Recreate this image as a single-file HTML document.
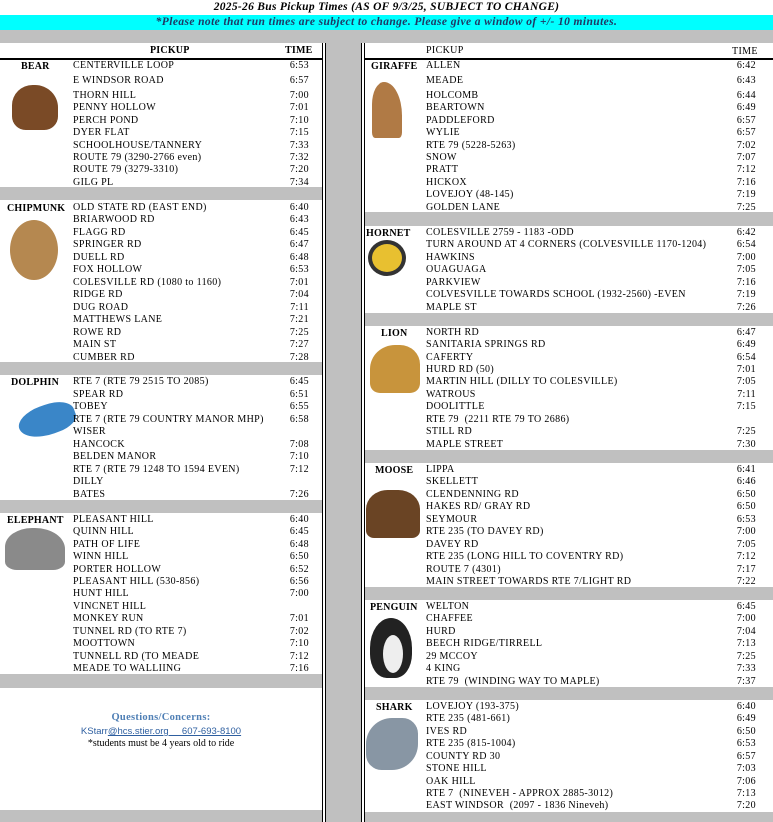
<!DOCTYPE html>
<html><head><meta charset="utf-8"><style>
*{margin:0;padding:0;box-sizing:border-box}
body{width:773px;height:822px;overflow:hidden;background:#fff;font-family:"Liberation Serif",serif;font-size:10px;color:#000;position:relative}
.a{position:absolute}
.r{position:absolute;height:12px;line-height:12px;white-space:nowrap;letter-spacing:.35px}
.g{position:absolute;background:#c0c0c0}
.n{font-weight:bold;letter-spacing:.2px}
.tl{position:absolute;width:40px;text-align:right}
</style></head><body>
<div class="a" style="left:0;top:0;width:773px;height:15px;text-align:center;line-height:15px;font-style:italic;font-weight:bold;font-size:11.5px;letter-spacing:.3px">2025-26 Bus Pickup Times (AS OF 9/3/25, SUBJECT TO CHANGE)</div>
<div class="a" style="left:0;top:15px;width:773px;height:15px;background:#00ffff;text-align:center;line-height:15px;font-style:italic;font-weight:bold;font-size:11.5px;letter-spacing:.4px;color:#1f3864">*Please note that run times are subject to change. Please give a window of +/- 10 minutes.</div>
<div class="g" style="left:0;top:30px;width:773px;height:13px"></div>
<div class="g" style="left:326px;top:43px;width:35px;height:779px"></div>
<div class="a" style="left:322px;top:43px;width:4px;height:779px;border-left:1px solid #000;border-right:1px solid #000"></div>
<div class="a" style="left:361px;top:43px;width:4px;height:779px;border-left:1px solid #000;border-right:1px solid #000"></div>
<div class="a" style="left:0;top:58px;width:322px;height:2px;background:#000"></div>
<div class="a" style="left:365px;top:58px;width:408px;height:2px;background:#000"></div>
<div class="r n" style="left:150px;top:45px">PICKUP</div>
<div class="r n" style="left:285px;top:45px">TIME</div>
<div class="r" style="left:426px;top:45px">PICKUP</div>
<div class="r" style="left:732px;top:46px">TIME</div>

<div class="g" style="left:0;top:187px;width:322px;height:13px"></div>
<div class="g" style="left:0;top:362px;width:322px;height:13px"></div>
<div class="g" style="left:0;top:500px;width:322px;height:13px"></div>
<div class="g" style="left:0;top:674px;width:322px;height:14px"></div>
<div class="g" style="left:0;top:810px;width:322px;height:12px"></div>
<div class="g" style="left:365px;top:212px;width:408px;height:14px"></div>
<div class="g" style="left:365px;top:313px;width:408px;height:13px"></div>
<div class="g" style="left:365px;top:450px;width:408px;height:13px"></div>
<div class="g" style="left:365px;top:587px;width:408px;height:13px"></div>
<div class="g" style="left:365px;top:687px;width:408px;height:13px"></div>
<div class="g" style="left:365px;top:812px;width:408px;height:10px"></div>

<div class="a" style="left:12px;top:85px;width:46px;height:45px;background:#7a4a26;border-radius:45% 50% 30% 30%"></div>
<div class="a" style="left:372px;top:82px;width:30px;height:56px;background:#b07a45;border-radius:40% 60% 10% 10%"></div>
<div class="a" style="left:10px;top:220px;width:48px;height:60px;background:#b58850;border-radius:50%"></div>
<div class="a" style="left:18px;top:405px;width:58px;height:30px;background:#3a86c8;border-radius:50% 50% 40% 60%;transform:rotate(-20deg)"></div>
<div class="a" style="left:5px;top:528px;width:60px;height:42px;background:#8a8a8a;border-radius:45% 50% 20% 20%"></div>
<div class="a" style="left:368px;top:240px;width:38px;height:36px;background:#e8c030;border-radius:50%;border:4px solid #333"></div>
<div class="a" style="left:370px;top:345px;width:50px;height:48px;background:#c8943c;border-radius:50% 40% 20% 20%"></div>
<div class="a" style="left:366px;top:490px;width:54px;height:48px;background:#6a4424;border-radius:40% 40% 15% 15%"></div>
<div class="a" style="left:370px;top:618px;width:42px;height:60px;background:#222;border-radius:50% 50% 40% 40%"></div>
<div class="a" style="left:383px;top:635px;width:20px;height:38px;background:#eee;border-radius:50%"></div>
<div class="a" style="left:366px;top:718px;width:52px;height:52px;background:#8896a4;border-radius:50% 30% 50% 30%"></div>

<div class="r n" style="left:21px;top:61px">BEAR</div>
<div class="r n" style="left:7px;top:203px">CHIPMUNK</div>
<div class="r n" style="left:11px;top:377px">DOLPHIN</div>
<div class="r n" style="left:7px;top:515px">ELEPHANT</div>
<div class="r n" style="left:371px;top:61px">GIRAFFE</div>
<div class="r n" style="left:366px;top:228px">HORNET</div>
<div class="r n" style="left:381px;top:328px">LION</div>
<div class="r n" style="left:375px;top:465px">MOOSE</div>
<div class="r n" style="left:370px;top:602px">PENGUIN</div>
<div class="r n" style="left:376px;top:702px">SHARK</div>

<div class="r" style="left:73px;top:60px">CENTERVILLE LOOP</div><div class="r tl" style="left:269px;top:60px">6:53</div>
<div class="r" style="left:73px;top:75px">E WINDSOR ROAD</div><div class="r tl" style="left:269px;top:75px">6:57</div>
<div class="r" style="left:73px;top:90px">THORN HILL</div><div class="r tl" style="left:269px;top:90px">7:00</div>
<div class="r" style="left:73px;top:102px">PENNY HOLLOW</div><div class="r tl" style="left:269px;top:102px">7:01</div>
<div class="r" style="left:73px;top:115px">PERCH POND</div><div class="r tl" style="left:269px;top:115px">7:10</div>
<div class="r" style="left:73px;top:127px">DYER FLAT</div><div class="r tl" style="left:269px;top:127px">7:15</div>
<div class="r" style="left:73px;top:140px">SCHOOLHOUSE/TANNERY</div><div class="r tl" style="left:269px;top:140px">7:33</div>
<div class="r" style="left:73px;top:152px">ROUTE 79 (3290-2766 even)</div><div class="r tl" style="left:269px;top:152px">7:32</div>
<div class="r" style="left:73px;top:164px">ROUTE 79 (3279-3310)</div><div class="r tl" style="left:269px;top:164px">7:20</div>
<div class="r" style="left:73px;top:177px">GILG PL</div><div class="r tl" style="left:269px;top:177px">7:34</div>

<div class="r" style="left:73px;top:202px">OLD STATE RD (EAST END)</div><div class="r tl" style="left:269px;top:202px">6:40</div>
<div class="r" style="left:73px;top:214px">BRIARWOOD RD</div><div class="r tl" style="left:269px;top:214px">6:43</div>
<div class="r" style="left:73px;top:227px">FLAGG RD</div><div class="r tl" style="left:269px;top:227px">6:45</div>
<div class="r" style="left:73px;top:239px">SPRINGER RD</div><div class="r tl" style="left:269px;top:239px">6:47</div>
<div class="r" style="left:73px;top:252px">DUELL RD</div><div class="r tl" style="left:269px;top:252px">6:48</div>
<div class="r" style="left:73px;top:264px">FOX HOLLOW</div><div class="r tl" style="left:269px;top:264px">6:53</div>
<div class="r" style="left:73px;top:277px">COLESVILLE RD (1080 to 1160)</div><div class="r tl" style="left:269px;top:277px">7:01</div>
<div class="r" style="left:73px;top:289px">RIDGE RD</div><div class="r tl" style="left:269px;top:289px">7:04</div>
<div class="r" style="left:73px;top:302px">DUG ROAD</div><div class="r tl" style="left:269px;top:302px">7:11</div>
<div class="r" style="left:73px;top:314px">MATTHEWS LANE</div><div class="r tl" style="left:269px;top:314px">7:21</div>
<div class="r" style="left:73px;top:327px">ROWE RD</div><div class="r tl" style="left:269px;top:327px">7:25</div>
<div class="r" style="left:73px;top:339px">MAIN ST</div><div class="r tl" style="left:269px;top:339px">7:27</div>
<div class="r" style="left:73px;top:352px">CUMBER RD</div><div class="r tl" style="left:269px;top:352px">7:28</div>

<div class="r" style="left:73px;top:376px">RTE 7 (RTE 79 2515 TO 2085)</div><div class="r tl" style="left:269px;top:376px">6:45</div>
<div class="r" style="left:73px;top:389px">SPEAR RD</div><div class="r tl" style="left:269px;top:389px">6:51</div>
<div class="r" style="left:73px;top:401px">TOBEY</div><div class="r tl" style="left:269px;top:401px">6:55</div>
<div class="r" style="left:73px;top:414px">RTE 7 (RTE 79 COUNTRY MANOR MHP)</div><div class="r tl" style="left:269px;top:414px">6:58</div>
<div class="r" style="left:73px;top:426px">WISER</div>
<div class="r" style="left:73px;top:439px">HANCOCK</div><div class="r tl" style="left:269px;top:439px">7:08</div>
<div class="r" style="left:73px;top:451px">BELDEN MANOR</div><div class="r tl" style="left:269px;top:451px">7:10</div>
<div class="r" style="left:73px;top:464px">RTE 7 (RTE 79 1248 TO 1594 EVEN)</div><div class="r tl" style="left:269px;top:464px">7:12</div>
<div class="r" style="left:73px;top:476px">DILLY</div>
<div class="r" style="left:73px;top:489px">BATES</div><div class="r tl" style="left:269px;top:489px">7:26</div>

<div class="r" style="left:73px;top:514px">PLEASANT HILL</div><div class="r tl" style="left:269px;top:514px">6:40</div>
<div class="r" style="left:73px;top:526px">QUINN HILL</div><div class="r tl" style="left:269px;top:526px">6:45</div>
<div class="r" style="left:73px;top:539px">PATH OF LIFE</div><div class="r tl" style="left:269px;top:539px">6:48</div>
<div class="r" style="left:73px;top:551px">WINN HILL</div><div class="r tl" style="left:269px;top:551px">6:50</div>
<div class="r" style="left:73px;top:564px">PORTER HOLLOW</div><div class="r tl" style="left:269px;top:564px">6:52</div>
<div class="r" style="left:73px;top:576px">PLEASANT HILL (530-856)</div><div class="r tl" style="left:269px;top:576px">6:56</div>
<div class="r" style="left:73px;top:588px">HUNT HILL</div><div class="r tl" style="left:269px;top:588px">7:00</div>
<div class="r" style="left:73px;top:601px">VINCNET HILL</div>
<div class="r" style="left:73px;top:613px">MONKEY RUN</div><div class="r tl" style="left:269px;top:613px">7:01</div>
<div class="r" style="left:73px;top:626px">TUNNEL RD (TO RTE 7)</div><div class="r tl" style="left:269px;top:626px">7:02</div>
<div class="r" style="left:73px;top:638px">MOOTTOWN</div><div class="r tl" style="left:269px;top:638px">7:10</div>
<div class="r" style="left:73px;top:651px">TUNNELL RD (TO MEADE</div><div class="r tl" style="left:269px;top:651px">7:12</div>
<div class="r" style="left:73px;top:663px">MEADE TO WALLIING</div><div class="r tl" style="left:269px;top:663px">7:16</div>

<div class="a" style="left:0;top:712px;width:322px;text-align:center;font-weight:bold;color:#4f7fb5;font-size:10.5px;letter-spacing:.3px">Questions/Concerns:</div>
<div class="a" style="left:0;top:726px;width:322px;text-align:center;color:#2e5fa0;font-family:'Liberation Sans',sans-serif;font-size:9.5px">KStarr<u>@hcs.stier.org&nbsp;&nbsp;&nbsp;&nbsp; 607-693-8100</u></div>
<div class="a" style="left:0;top:738px;width:322px;text-align:center;font-size:10px">*students must be 4 years old to ride</div>

<div class="r" style="left:426px;top:60px">ALLEN</div><div class="r tl" style="left:716px;top:60px">6:42</div>
<div class="r" style="left:426px;top:75px">MEADE</div><div class="r tl" style="left:716px;top:75px">6:43</div>
<div class="r" style="left:426px;top:90px">HOLCOMB</div><div class="r tl" style="left:716px;top:90px">6:44</div>
<div class="r" style="left:426px;top:102px">BEARTOWN</div><div class="r tl" style="left:716px;top:102px">6:49</div>
<div class="r" style="left:426px;top:115px">PADDLEFORD</div><div class="r tl" style="left:716px;top:115px">6:57</div>
<div class="r" style="left:426px;top:127px">WYLIE</div><div class="r tl" style="left:716px;top:127px">6:57</div>
<div class="r" style="left:426px;top:140px">RTE 79 (5228-5263)</div><div class="r tl" style="left:716px;top:140px">7:02</div>
<div class="r" style="left:426px;top:152px">SNOW</div><div class="r tl" style="left:716px;top:152px">7:07</div>
<div class="r" style="left:426px;top:164px">PRATT</div><div class="r tl" style="left:716px;top:164px">7:12</div>
<div class="r" style="left:426px;top:177px">HICKOX</div><div class="r tl" style="left:716px;top:177px">7:16</div>
<div class="r" style="left:426px;top:189px">LOVEJOY (48-145)</div><div class="r tl" style="left:716px;top:189px">7:19</div>
<div class="r" style="left:426px;top:202px">GOLDEN LANE</div><div class="r tl" style="left:716px;top:202px">7:25</div>

<div class="r" style="left:426px;top:227px">COLESVILLE 2759 - 1183 -ODD</div><div class="r tl" style="left:716px;top:227px">6:42</div>
<div class="r" style="left:426px;top:239px">TURN AROUND AT 4 CORNERS (COLVESVILLE 1170-1204)</div><div class="r tl" style="left:716px;top:239px">6:54</div>
<div class="r" style="left:426px;top:252px">HAWKINS</div><div class="r tl" style="left:716px;top:252px">7:00</div>
<div class="r" style="left:426px;top:264px">OUAGUAGA</div><div class="r tl" style="left:716px;top:264px">7:05</div>
<div class="r" style="left:426px;top:277px">PARKVIEW</div><div class="r tl" style="left:716px;top:277px">7:16</div>
<div class="r" style="left:426px;top:289px">COLVESVILLE TOWARDS SCHOOL (1932-2560) -EVEN</div><div class="r tl" style="left:716px;top:289px">7:19</div>
<div class="r" style="left:426px;top:302px">MAPLE ST</div><div class="r tl" style="left:716px;top:302px">7:26</div>

<div class="r" style="left:426px;top:327px">NORTH RD</div><div class="r tl" style="left:716px;top:327px">6:47</div>
<div class="r" style="left:426px;top:339px">SANITARIA SPRINGS RD</div><div class="r tl" style="left:716px;top:339px">6:49</div>
<div class="r" style="left:426px;top:352px">CAFERTY</div><div class="r tl" style="left:716px;top:352px">6:54</div>
<div class="r" style="left:426px;top:364px">HURD RD (50)</div><div class="r tl" style="left:716px;top:364px">7:01</div>
<div class="r" style="left:426px;top:376px">MARTIN HILL (DILLY TO COLESVILLE)</div><div class="r tl" style="left:716px;top:376px">7:05</div>
<div class="r" style="left:426px;top:389px">WATROUS</div><div class="r tl" style="left:716px;top:389px">7:11</div>
<div class="r" style="left:426px;top:401px">DOOLITTLE</div><div class="r tl" style="left:716px;top:401px">7:15</div>
<div class="r" style="left:426px;top:414px">RTE 79&nbsp; (2211 RTE 79 TO 2686)</div>
<div class="r" style="left:426px;top:426px">STILL RD</div><div class="r tl" style="left:716px;top:426px">7:25</div>
<div class="r" style="left:426px;top:439px">MAPLE STREET</div><div class="r tl" style="left:716px;top:439px">7:30</div>

<div class="r" style="left:426px;top:464px">LIPPA</div><div class="r tl" style="left:716px;top:464px">6:41</div>
<div class="r" style="left:426px;top:476px">SKELLETT</div><div class="r tl" style="left:716px;top:476px">6:46</div>
<div class="r" style="left:426px;top:489px">CLENDENNING RD</div><div class="r tl" style="left:716px;top:489px">6:50</div>
<div class="r" style="left:426px;top:501px">HAKES RD/ GRAY RD</div><div class="r tl" style="left:716px;top:501px">6:50</div>
<div class="r" style="left:426px;top:514px">SEYMOUR</div><div class="r tl" style="left:716px;top:514px">6:53</div>
<div class="r" style="left:426px;top:526px">RTE 235 (TO DAVEY RD)</div><div class="r tl" style="left:716px;top:526px">7:00</div>
<div class="r" style="left:426px;top:539px">DAVEY RD</div><div class="r tl" style="left:716px;top:539px">7:05</div>
<div class="r" style="left:426px;top:551px">RTE 235 (LONG HILL TO COVENTRY RD)</div><div class="r tl" style="left:716px;top:551px">7:12</div>
<div class="r" style="left:426px;top:564px">ROUTE 7 (4301)</div><div class="r tl" style="left:716px;top:564px">7:17</div>
<div class="r" style="left:426px;top:576px">MAIN STREET TOWARDS RTE 7/LIGHT RD</div><div class="r tl" style="left:716px;top:576px">7:22</div>

<div class="r" style="left:426px;top:601px">WELTON</div><div class="r tl" style="left:716px;top:601px">6:45</div>
<div class="r" style="left:426px;top:613px">CHAFFEE</div><div class="r tl" style="left:716px;top:613px">7:00</div>
<div class="r" style="left:426px;top:626px">HURD</div><div class="r tl" style="left:716px;top:626px">7:04</div>
<div class="r" style="left:426px;top:638px">BEECH RIDGE/TIRRELL</div><div class="r tl" style="left:716px;top:638px">7:13</div>
<div class="r" style="left:426px;top:651px">29 MCCOY</div><div class="r tl" style="left:716px;top:651px">7:25</div>
<div class="r" style="left:426px;top:663px">4 KING</div><div class="r tl" style="left:716px;top:663px">7:33</div>
<div class="r" style="left:426px;top:676px">RTE 79&nbsp; (WINDING WAY TO MAPLE)</div><div class="r tl" style="left:716px;top:676px">7:37</div>

<div class="r" style="left:426px;top:701px">LOVEJOY (193-375)</div><div class="r tl" style="left:716px;top:701px">6:40</div>
<div class="r" style="left:426px;top:713px">RTE 235 (481-661)</div><div class="r tl" style="left:716px;top:713px">6:49</div>
<div class="r" style="left:426px;top:726px">IVES RD</div><div class="r tl" style="left:716px;top:726px">6:50</div>
<div class="r" style="left:426px;top:738px">RTE 235 (815-1004)</div><div class="r tl" style="left:716px;top:738px">6:53</div>
<div class="r" style="left:426px;top:751px">COUNTY RD 30</div><div class="r tl" style="left:716px;top:751px">6:57</div>
<div class="r" style="left:426px;top:763px">STONE HILL</div><div class="r tl" style="left:716px;top:763px">7:03</div>
<div class="r" style="left:426px;top:776px">OAK HILL</div><div class="r tl" style="left:716px;top:776px">7:06</div>
<div class="r" style="left:426px;top:788px">RTE 7&nbsp; (NINEVEH - APPROX 2885-3012)</div><div class="r tl" style="left:716px;top:788px">7:13</div>
<div class="r" style="left:426px;top:800px">EAST WINDSOR&nbsp; (2097 - 1836 Nineveh)</div><div class="r tl" style="left:716px;top:800px">7:20</div>
</body></html>
